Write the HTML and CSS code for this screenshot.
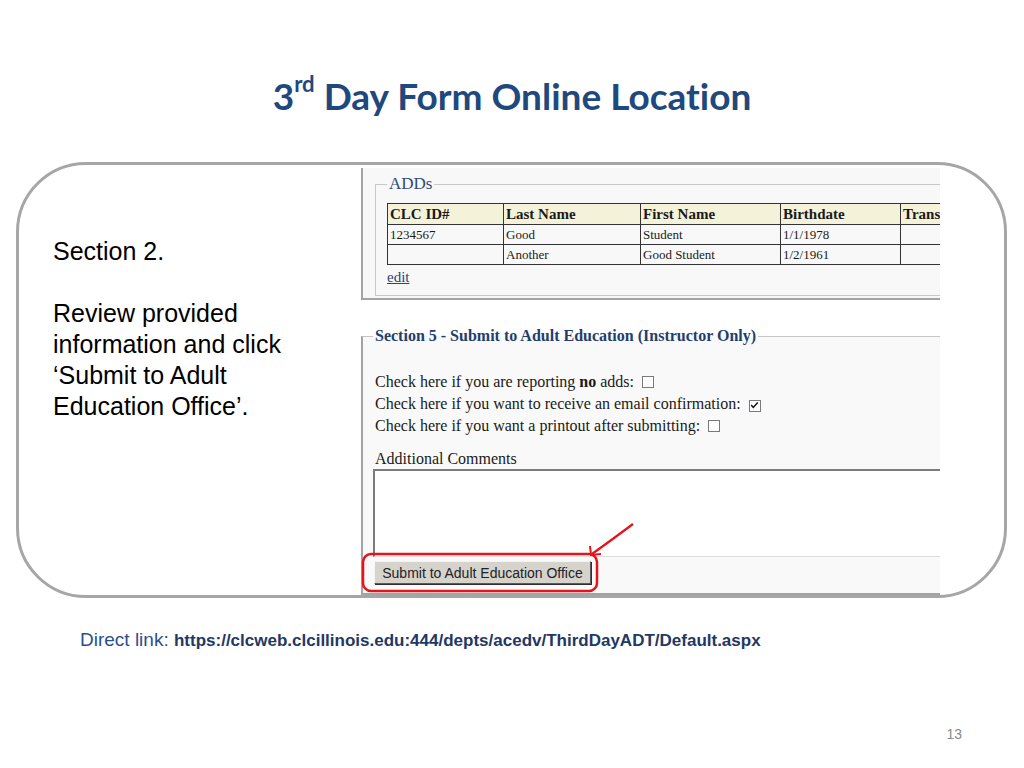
FILE: index.html
```html
<!DOCTYPE html>
<html lang="en">
<head>
  <meta charset="UTF-8">
  <title>3rd Day Form Online Location</title>
  <link rel="stylesheet" href="styles.css">
</head>
<body>
  <h1 class="title">3<sup>rd</sup> Day Form Online Location</h1>

  <div class="frame">
    <div class="notes">
      <p>Section 2.</p>
      <p>Review provided information and click ‘Submit to Adult Education Office’.</p>
    </div>

    <div class="shot">
      <div class="adds-panel">
        <fieldset class="adds">
          <legend>ADDs</legend>
          <table class="adds-table">
            <tr>
              <th class="c1">CLC ID#</th>
              <th class="c2">Last Name</th>
              <th class="c3">First Name</th>
              <th class="c4">Birthdate</th>
              <th class="c5">Trans:</th>
            </tr>
            <tr>
              <td>1234567</td>
              <td>Good</td>
              <td>Student</td>
              <td>1/1/1978</td>
              <td></td>
            </tr>
            <tr>
              <td></td>
              <td>Another</td>
              <td>Good Student</td>
              <td>1/2/1961</td>
              <td></td>
            </tr>
          </table>
          <a class="edit" href="#">edit</a>
        </fieldset>
      </div>

      <fieldset class="submit">
        <legend>Section 5 - Submit to Adult Education (Instructor Only)</legend>
        <div class="checks">
          <div class="check-row">Check here if you are reporting <b>no</b> adds: <span class="cb"></span></div>
          <div class="check-row">Check here if you want to receive an email confirmation: <span class="cb"><svg viewBox="0 0 11 11" width="9" height="9"><path d="M1.5 5 L4 7.8 L9.5 1.8" fill="none" stroke="#111" stroke-width="1.8"/></svg></span></div>
          <div class="check-row">Check here if you want a printout after submitting: <span class="cb"></span></div>
        </div>
        <div class="comments-label">Additional Comments</div>
        <div class="comments"></div>
        <button class="submit-btn" type="button">Submit to Adult Education Office</button>
      </fieldset>

      <svg class="callout" width="579" height="427" viewBox="0 0 579 427">
        <rect x="2" y="386" width="234" height="37" rx="8" fill="none" stroke="#e3141b" stroke-width="2.5"/>
        <path d="M272 356 Q252 371 231 386" fill="none" stroke="#e3141b" stroke-width="2.2"/>
        <path d="M229 378 L230 387 L240 386" fill="none" stroke="#e3141b" stroke-width="2"/>
      </svg>
    </div>
  </div>

  <p class="direct">Direct link: <b>https://clcweb.clcillinois.edu:444/depts/acedv/ThirdDayADT/Default.aspx</b></p>

  <div class="page-num">13</div>
</body>
</html>
```

FILE: styles.css
```css
body {
  margin: 0;
  width: 1024px;
  height: 768px;
  background: #fff;
  font-family: 'Liberation Sans', Arial, sans-serif;
  overflow: hidden;
}

.title {
  margin: 74px 0 0;
  height: 44px;
  line-height: 44px;
  text-align: center;
  font-family: Lato, 'Open Sans', sans-serif;
  font-weight: 700;
  font-size: 37px;
  font-variant-ligatures: none;
  color: #1f497d;
}
.title sup {
  font-size: 0.6em;
  line-height: 0;
  vertical-align: 0.8em;
}

.frame {
  box-sizing: border-box;
  margin: 44px 0 0 16px;
  width: 991px;
  height: 436px;
  border: 3px solid #a6a6a6;
  border-radius: 70px;
  display: flex;
}

.notes {
  width: 342px;
  flex-shrink: 0;
  box-sizing: border-box;
  padding: 71px 0 0 34px;
  font-size: 25px;
  line-height: 31px;
  color: #000;
}
.notes p {
  margin: 0 0 31px;
  max-width: 260px;
}

/* the pasted screenshot of the web form */
.shot {
  position: relative;
  width: 579px;
  height: 427px;
  margin-top: 3px;
  overflow: hidden;
  font-family: 'Liberation Serif', 'Times New Roman', serif;
  color: #1a1a1a;
}

.adds-panel {
  box-sizing: border-box;
  height: 132px;
  padding: 6px 0 2px 12px;
  background: #f8f8f8;
  border-left: 2px solid #a3a3a3;
  border-bottom: 2px solid #a3a3a3;
}
.adds {
  margin: 0;
  width: 640px;
  padding: 0 0 9px 11px;
  border: 1px solid #c8c8c8;
}
.adds legend {
  padding: 0 2px;
  font-size: 17px;
  line-height: 20px;
  color: #2d4a7a;
}
.adds-table {
  margin-top: 9px;
  border-collapse: collapse;
  border: 1px solid #333;
}
.adds-table th,
.adds-table td {
  border: 1px solid #333;
  padding: 0 2px;
  text-align: left;
  white-space: nowrap;
}
.adds-table th {
  height: 20px;
  background: #f5f2da;
  font-size: 15px;
  line-height: 19px;
}
.adds-table td {
  height: 19px;
  font-size: 13px;
  line-height: 18px;
}
.c1 { width: 111px; }
.c2 { width: 132px; }
.c3 { width: 135px; }
.c4 { width: 115px; }
.c5 { width: 80px; }
.edit {
  display: block;
  margin-top: 3px;
  font-size: 15px;
  line-height: 18px;
  color: #26457a;
}

.submit {
  margin: 26px 0 0;
  width: 640px;
  padding: 0 0 9px 12px;
  background: #f9f9f9;
  border: 2px solid #a3a3a3;
  border-top: 1px solid #c4c4c4;
  border-right: none;
}
.submit legend {
  margin-left: -2px;
  padding: 0 2px;
  font-weight: 700;
  font-size: 16px;
  line-height: 20px;
  color: #1f3f6e;
}
.checks {
  margin-top: 25px;
}
.check-row {
  font-size: 16px;
  line-height: 22px;
}
.cb {
  display: inline-flex;
  align-items: center;
  justify-content: center;
  box-sizing: border-box;
  width: 12px;
  height: 12px;
  margin-left: 4px;
  vertical-align: -1px;
  background: #fff;
  border: 1px solid #7a7a7a;
}
.comments-label {
  margin-top: 12px;
  font-size: 16px;
  line-height: 20px;
}
.comments {
  box-sizing: border-box;
  margin-left: -2px;
  height: 88px;
  background: #fff;
  border-top: 2px solid #7c7c7c;
  border-left: 2px solid #7c7c7c;
  border-bottom: 1px solid #dcdcdc;
}
.submit-btn {
  display: block;
  box-sizing: border-box;
  margin: 4px 0 0 -1px;
  width: 217px;
  height: 23px;
  padding: 0;
  font-family: 'Liberation Sans', Arial, sans-serif;
  font-size: 14px;
  color: #222;
  background: #d6d3cd;
  border: 1px solid;
  border-color: #f4f4f4 #5a5a5a #5a5a5a #f4f4f4;
  box-shadow: 1px 1px 0 #2e2e2e;
}

.callout {
  position: absolute;
  left: 0;
  top: 0;
}

.direct {
  margin: 30px 0 0 80px;
  line-height: 24px;
  font-size: 19px;
  color: #2c4f8a;
}
.direct b {
  font-size: 17px;
  color: #1f3864;
}

.page-num {
  margin-top: 72px;
  padding-right: 62px;
  text-align: right;
  font-size: 14px;
  line-height: 18px;
  color: #8a8a8a;
}
```
